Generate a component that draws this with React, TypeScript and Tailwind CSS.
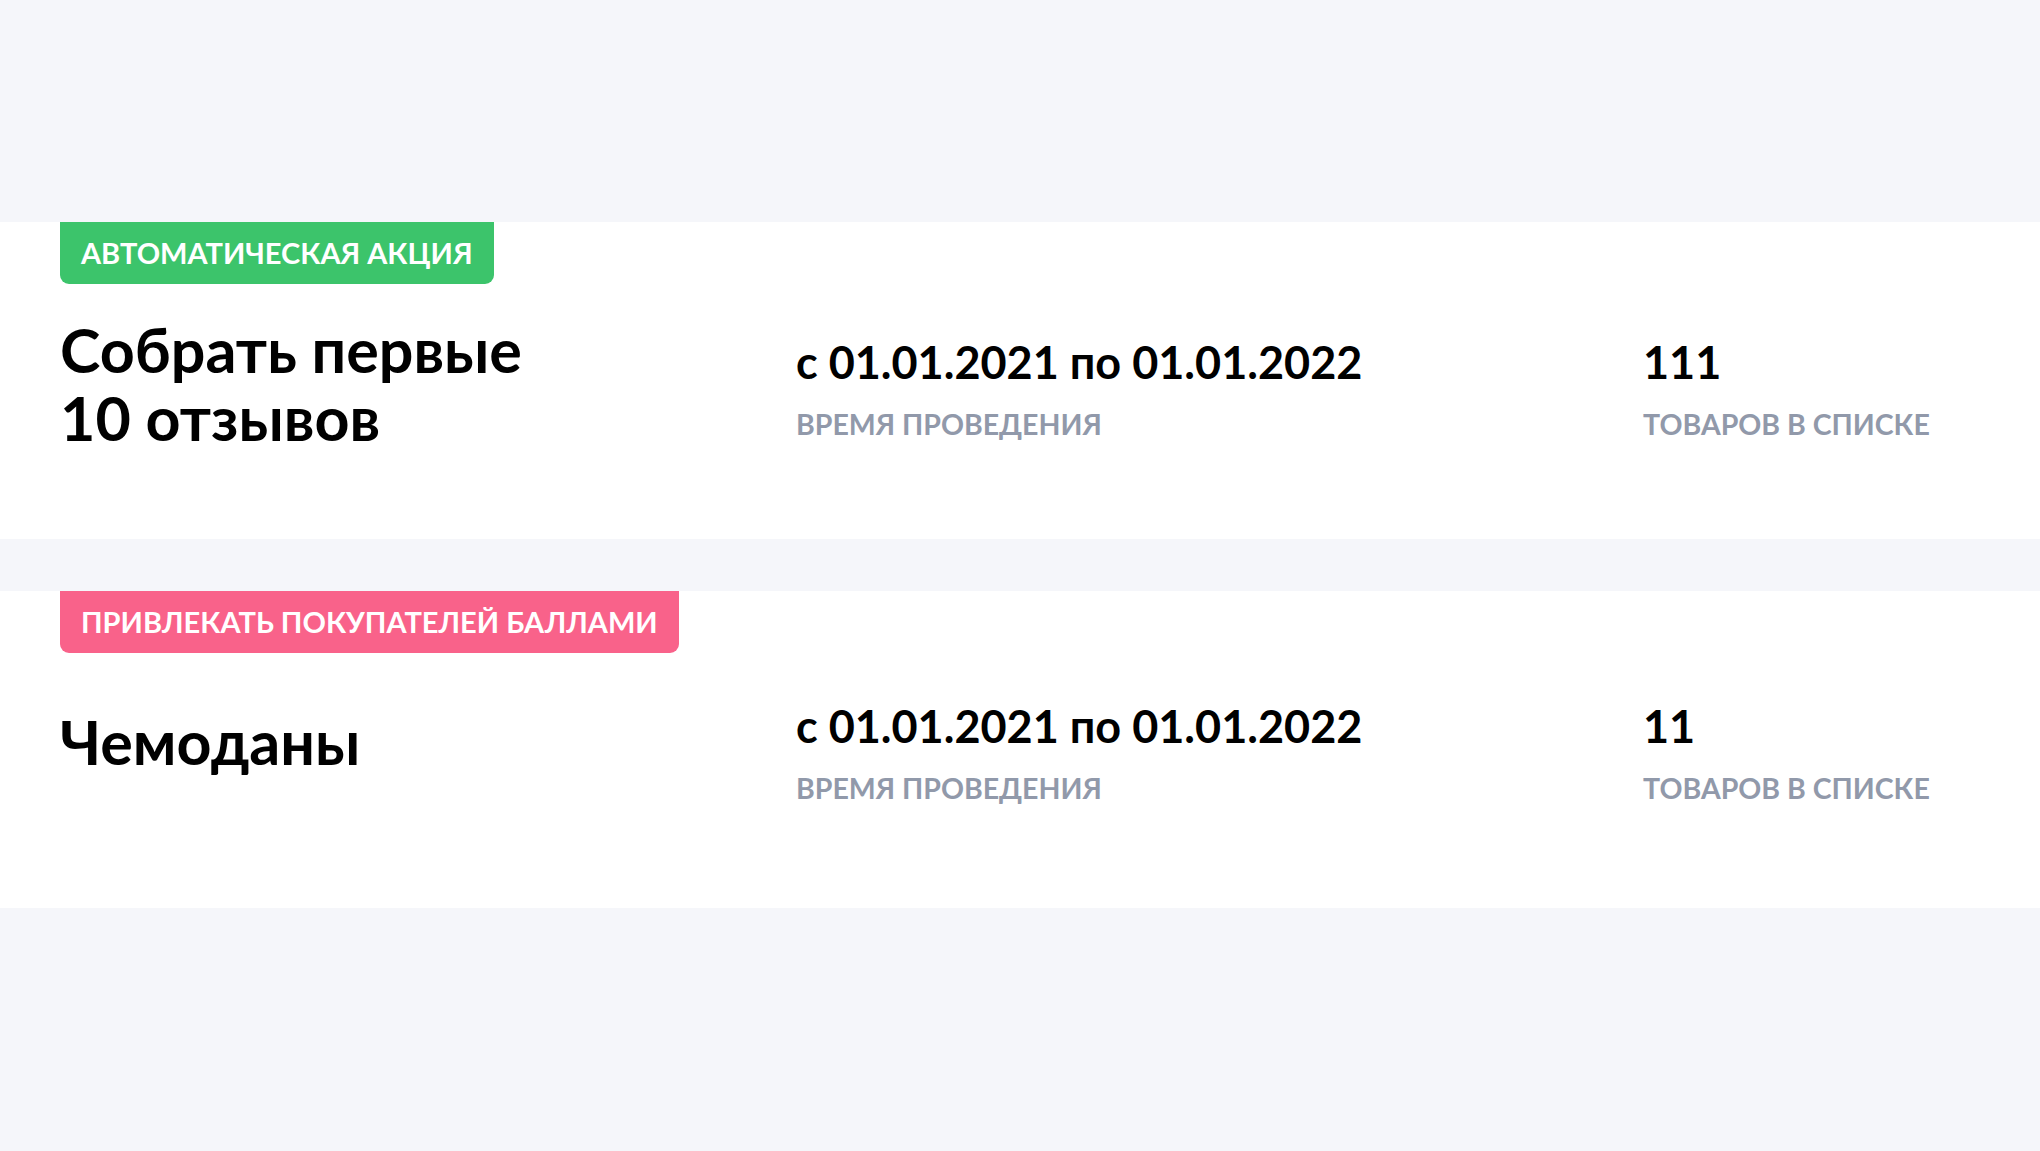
import React from "react";

type Promo = {
  badge: string;
  badgeClass: string;
  title: React.ReactNode;
  titleClass: string;
  count: string;
};

const promos: Promo[] = [
  {
    badge: "Автоматическая акция",
    badgeClass: "bg-[#3cc46b]",
    title: (
      <>
        Собрать первые
        <br />
        10 отзывов
      </>
    ),
    titleClass: "",
    count: "111",
  },
  {
    badge: "Привлекать покупателей баллами",
    badgeClass: "bg-[#f9628a]",
    title: "Чемоданы",
    titleClass: "mb-[12px]",
    count: "11",
  },
];

function Stat({ value, label }: { value: string; label: string }) {
  return (
    <div className="flex flex-col pt-[10px]">
      <div className="text-[45px] leading-[48px] font-bold text-black">{value}</div>
      <div className="mt-[21px] text-[28.5px] leading-[34px] font-bold uppercase text-[#9199aa]">
        {label}
      </div>
    </div>
  );
}

function PromoCard({ p }: { p: Promo }) {
  return (
    <div className="bg-white h-[317px] px-[60px]">
      <div
        className={`inline-flex items-center h-[62px] px-[21px] rounded-b-[9px] text-white uppercase font-bold text-[29px] ${p.badgeClass}`}
      >
        {p.badge}
      </div>
      <div className="grid grid-cols-[736px_847px_1fr] items-center min-h-[126px] mt-[32px]">
        <div className={`text-[61px] leading-[68px] font-bold text-black ${p.titleClass}`}>
          {p.title}
        </div>
        <Stat value="с 01.01.2021 по 01.01.2022" label="Время проведения" />
        <Stat value={p.count} label="Товаров в списке" />
      </div>
    </div>
  );
}

export default function App() {
  return (
    <div
      className="min-h-screen bg-[#f5f6fa] pt-[222px] flex flex-col gap-[52px]"
      style={{ fontFamily: "Lato, 'Noto Sans', sans-serif" }}
    >
      {promos.map((p, i) => (
        <PromoCard key={i} p={p} />
      ))}
    </div>
  );
}
